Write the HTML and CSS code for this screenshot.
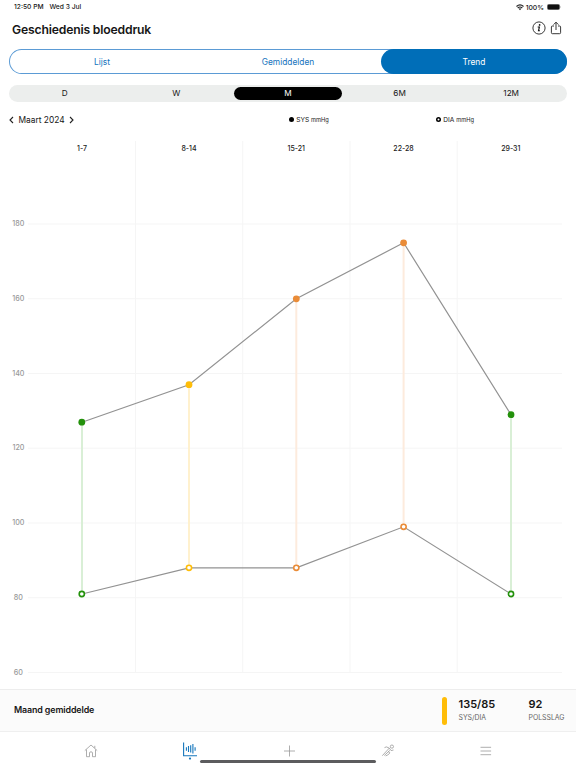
FILE: index.html
```
<!DOCTYPE html>
<html lang="nl">

<head>
    <meta charset="UTF-8">
    <meta name="viewport" content="width=device-width, initial-scale=1.0">
    <title>Geschiedenis bloeddruk</title>
    <link rel="stylesheet" href="styles.css">
</head>

<body>
    <div class="status-bar">
        <span class="time">12:50 PM</span>
        <span class="date">Wed 3 Jul</span>
        <svg class="wifi" width="8" height="7" viewBox="0 0 8 7" fill="none" stroke="#222" stroke-width="1.2">
            <path d="M.5 2.5Q4-.6 7.5 2.5M1.7 4Q4 2 6.3 4" />
            <path d="M2.7 4.8Q4 3.8 5.3 4.8L4 6.3Z" fill="#222" stroke="none" />
        </svg>
        <span class="percent">100%</span>
        <svg width="15" height="6" viewBox="0 0 15 6">
            <rect x=".3" y=".3" width="12.4" height="5.4" rx="1.7" fill="#111" stroke="#777" stroke-width=".6" />
            <path d="M13.5 2v2q1-1 0-2" fill="#888" />
        </svg>
    </div>

    <header class="header">
        <h1>Geschiedenis bloeddruk</h1>
        <svg class="info" width="14" height="14" viewBox="0 0 14 14">
            <circle cx="7" cy="7" r="6.1" fill="none" stroke="#222" stroke-width=".9" />
            <circle cx="7.6" cy="3.9" r=".85" fill="#111" />
            <path d="M5.7 6h1.7L6.5 9.8h1.4" fill="none" stroke="#111" stroke-width="1.1" />
        </svg>
        <svg width="12" height="14" viewBox="0 0 12 14" fill="none" stroke="#222" stroke-width=".9">
            <path d="M4 5H2.4Q1.4 5 1.4 6v5.7q0 1 1 1h7.2q1 0 1-1V6q0-1-1-1H8M6 9V1.2M3.6 3.6 6 1.2l2.4 2.4" />
        </svg>
    </header>

    <nav class="tabs">
        <span class="tab">Lijst</span>
        <span class="tab">Gemiddelden</span>
        <span class="tab active">Trend</span>
    </nav>

    <div class="periods">
        <span class="period">D</span>
        <span class="period">W</span>
        <span class="period active">M</span>
        <span class="period">6M</span>
        <span class="period">12M</span>
    </div>

    <div class="legend">
        <div class="month">
            <svg width="5" height="8" viewBox="0 0 5 8"><path d="M4 1 1 4l3 3" /></svg>
            <span>Maart 2024</span>
            <svg width="5" height="8" viewBox="0 0 5 8"><path d="M1 1l3 3-3 3" /></svg>
        </div>
        <div class="key key-sys"><i class="dot"></i>SYS <small>mmHg</small></div>
        <div class="key key-dia"><i class="dot ring"></i>DIA <small>mmHg</small></div>
    </div>

    <svg class="chart" width="576" height="559" viewBox="0 130 576 559">
        <g class="grid">
            <path d="M28 224H562M28 298.7H562M28 373.5H562M28 448.2H562M28 523H562M28 597.7H562M28 672.5H562" />
            <path d="M135.5 141V672.5M242.7 141V672.5M350 141V672.5M457.2 141V672.5" />
        </g>
        <g class="weeks">
            <text x="82" y="150.7">1-7</text>
            <text x="189" y="150.7">8-14</text>
            <text x="296.3" y="150.7">15-21</text>
            <text x="403.5" y="150.7">22-28</text>
            <text x="510.8" y="150.7">29-31</text>
        </g>
        <g class="scale">
            <text x="24.5" y="226">180</text>
            <text x="24.5" y="300.8">160</text>
            <text x="24.5" y="375.6">140</text>
            <text x="24.5" y="450.4">120</text>
            <text x="24.5" y="525.1">100</text>
            <text x="22.8" y="599.9">80</text>
            <text x="22.8" y="674.7">60</text>
        </g>
        <g class="ranges">
            <path class="green" d="M82 422V594M511 414.5V594" />
            <path class="yellow" d="M189 384.7V568" />
            <path class="orange" d="M296.3 299V568M403.6 242.8V527" />
        </g>
        <g class="lines">
            <path d="M82 422.2 189 384.7 296.3 298.8 403.6 242.8 511 414.7" />
            <path d="M82 594 189 567.8H296.3L403.6 526.8 511 594" />
        </g>
        <g class="points-sys">
            <circle class="green" cx="81.8" cy="422.2" r="3.4" />
            <circle class="yellow" cx="189" cy="384.7" r="3.4" />
            <circle class="orange" cx="296.3" cy="298.8" r="3.4" />
            <circle class="orange" cx="403.6" cy="242.8" r="3.4" />
            <circle class="green" cx="511" cy="414.7" r="3.4" />
        </g>
        <g class="points-dia">
            <circle class="green" cx="81.8" cy="594" r="2.6" />
            <circle class="yellow" cx="189" cy="567.8" r="2.6" />
            <circle class="orange" cx="296.3" cy="567.8" r="2.6" />
            <circle class="orange" cx="403.6" cy="526.8" r="2.6" />
            <circle class="green" cx="511" cy="594" r="2.6" />
        </g>
    </svg>

    <section class="summary">
        <h2>Maand gemiddelde</h2>
        <div class="level"></div>
        <div class="value value-bp"><strong>135/85</strong><span>SYS/DIA</span></div>
        <div class="value value-pulse"><strong>92</strong><span>POLSSLAG</span></div>
    </section>

    <footer class="tab-bar">
        <svg width="14" height="14" viewBox="0 0 14 14">
            <path d="M.8 6.6 7 1l6.2 5.6M2.5 5.5v7.2h3V9q0-1.2 1.5-1.2T8.5 9v3.7h3V5.5M10.8 4.1V1.8" />
        </svg>
        <svg class="current" width="16" height="18" viewBox="0 0 16 18">
            <path d="M1.6 .5v13.3H15" />
            <path d="M4.4 5.2v3.6M6.5 4v6M8.7 3.3v7.3M10.9 2v9.6M13.1 5.2v3.6" />
            <circle cx="8" cy="16.6" r="1.1" />
        </svg>
        <svg width="14" height="14" viewBox="0 0 14 14">
            <path d="M7.5 1.5v11M2 7h11" />
        </svg>
        <svg width="14" height="14" viewBox="0 0 14 14">
            <circle cx="10.9" cy="2.6" r="1.6" />
            <path d="M3.5 3.6 5.4 2.9l2.9 1.2L1.3 11.7M8.3 4.1l1.8 2.5 2.4-.6M7.1 7.4l1.8 1.5L6.8 11l-2.2.9M8.9 6.4 3.3 11.5" />
        </svg>
        <svg width="14" height="14" viewBox="0 0 14 14">
            <path d="M1.5 3.3h10.6M1.5 7h10.6M1.5 10.7h10.6" />
        </svg>
        <div class="home-indicator"></div>
    </footer>
</body>

</html>
```
FILE: styles.css
```
body {
    width: 576px;
    height: 768px;
    margin: 0;
    overflow: hidden;
    display: flex;
    flex-direction: column;
    background: #fff;
    color: #161616;
    font-family: Inter, "Liberation Sans", sans-serif;
}

h1,
h2 {
    margin: 0;
}

.status-bar {
    height: 14px;
    padding: 0 14px;
    box-sizing: border-box;
    display: flex;
    align-items: center;
    flex: none;
    font-size: 6.7px;
    font-weight: 500;
}

.time {
    width: 35.5px;
}

.wifi {
    margin-left: auto;
    margin-right: 2px;
}

.percent {
    margin-right: 3px;
    font-size: 6.8px;
}

.header {
    height: 35px;
    padding: 0 14px 8px 12px;
    box-sizing: border-box;
    display: flex;
    align-items: center;
    flex: none;
}

.header h1 {
    flex: 1;
    padding-top: 4px;
    font-size: 12.2px;
    font-weight: 600;
    letter-spacing: -.18px;
    line-height: 16px;
}

.info {
    margin-right: 4px;
}

.tabs {
    display: flex;
    flex: none;
    height: 25px;
    margin: 0 9px;
    box-sizing: border-box;
    border-radius: 13px;
    box-shadow: inset 0 0 0 1px #5b9bd5;
    color: #1473bd;
    font-size: 8.4px;
}

.tab {
    flex: 1;
    display: flex;
    align-items: center;
    justify-content: center;
}

.tab.active {
    background: #006eb8;
    color: #fff;
    border-radius: 13px;
}

.periods {
    display: flex;
    flex: none;
    height: 17px;
    margin: 11px 9px 0;
    border-radius: 9px;
    background: #eceeed;
    font-size: 8.2px;
}

.period {
    flex: 1;
    margin: 2px;
    padding-bottom: 1px;
    box-sizing: border-box;
    display: flex;
    align-items: center;
    justify-content: center;
}

.period.active {
    background: #000;
    color: #fff;
    border-radius: 7px;
}

.legend {
    height: 28px;
    padding: 7px 9px 0;
    box-sizing: border-box;
    display: flex;
    align-items: center;
    flex: none;
}

.month {
    width: 279.5px;
    display: flex;
    align-items: center;
    gap: 4.5px;
    font-size: 8.4px;
}

.month path {
    fill: none;
    stroke: #222;
    stroke-width: 1.1;
}

.key {
    display: flex;
    align-items: center;
    font-size: 6.6px;
    white-space: pre;
}

.key-sys {
    width: 147px;
}

.key small {
    font-size: 5.7px;
}

.dot {
    width: 5.4px;
    height: 5.4px;
    margin-right: 2.4px;
    box-sizing: border-box;
    border-radius: 50%;
    background: #000;
}

.dot.ring {
    background: #fff;
    box-shadow: inset 0 0 0 1.5px #000;
}

.chart {
    flex: none;
    display: block;
}

.grid {
    stroke: #f5f5f5;
    stroke-width: 1;
}

.weeks {
    font-size: 7px;
    font-weight: 500;
    text-anchor: middle;
    fill: #222;
}

.scale {
    font-size: 7.2px;
    font-weight: 500;
    text-anchor: end;
    fill: #999;
}

.ranges {
    stroke-width: 2;
}

.ranges .green {
    stroke: #d9efd6;
}

.ranges .yellow {
    stroke: #fff1ce;
}

.ranges .orange {
    stroke: #fdebdd;
}

.lines {
    fill: none;
    stroke: #929292;
    stroke-width: 1.2;
}

.points-sys .green {
    fill: #23910b;
}

.points-sys .yellow {
    fill: #ffbd08;
}

.points-sys .orange {
    fill: #ea8c38;
}

.points-dia {
    fill: #fff;
    stroke-width: 1.6;
}

.points-dia .green {
    stroke: #23910b;
}

.points-dia .yellow {
    stroke: #ffbd08;
}

.points-dia .orange {
    stroke: #ea8c38;
}

.summary {
    height: 42px;
    padding-left: 14px;
    box-sizing: border-box;
    display: flex;
    align-items: center;
    flex: none;
    background: #fbfbfb;
    border-top: 1px solid #ededed;
}

.summary h2 {
    width: 428px;
    padding-bottom: 2px;
    font-size: 8.9px;
    font-weight: 600;
    letter-spacing: -.12px;
}

.level {
    width: 5px;
    height: 28px;
    margin-right: 11.5px;
    border-radius: 3px;
    background: #ffbd08;
}

.value {
    display: flex;
    flex-direction: column;
}

.value-bp {
    width: 70px;
}

.value strong {
    font-size: 11px;
    font-weight: 600;
    line-height: 13px;
}

.value span {
    color: #666;
    font-size: 6.9px;
    line-height: 13px;
}

.tab-bar {
    position: relative;
    flex: 1;
    padding: 12px 83px 0 83.5px;
    display: flex;
    justify-content: space-between;
    align-items: flex-start;
    border-top: 1px solid #efefef;
}

.tab-bar svg {
    fill: none;
    stroke: #999;
    stroke-width: .8;
}

.tab-bar .current {
    margin-top: -2px;
    stroke: #1677bd;
    stroke-width: 1.1;
}

.tab-bar .current circle {
    fill: #1677bd;
    stroke: none;
}

.home-indicator {
    position: absolute;
    left: 200px;
    bottom: 5px;
    width: 176px;
    height: 3px;
    border-radius: 2px;
    background: #5c5c5e;
}
```
